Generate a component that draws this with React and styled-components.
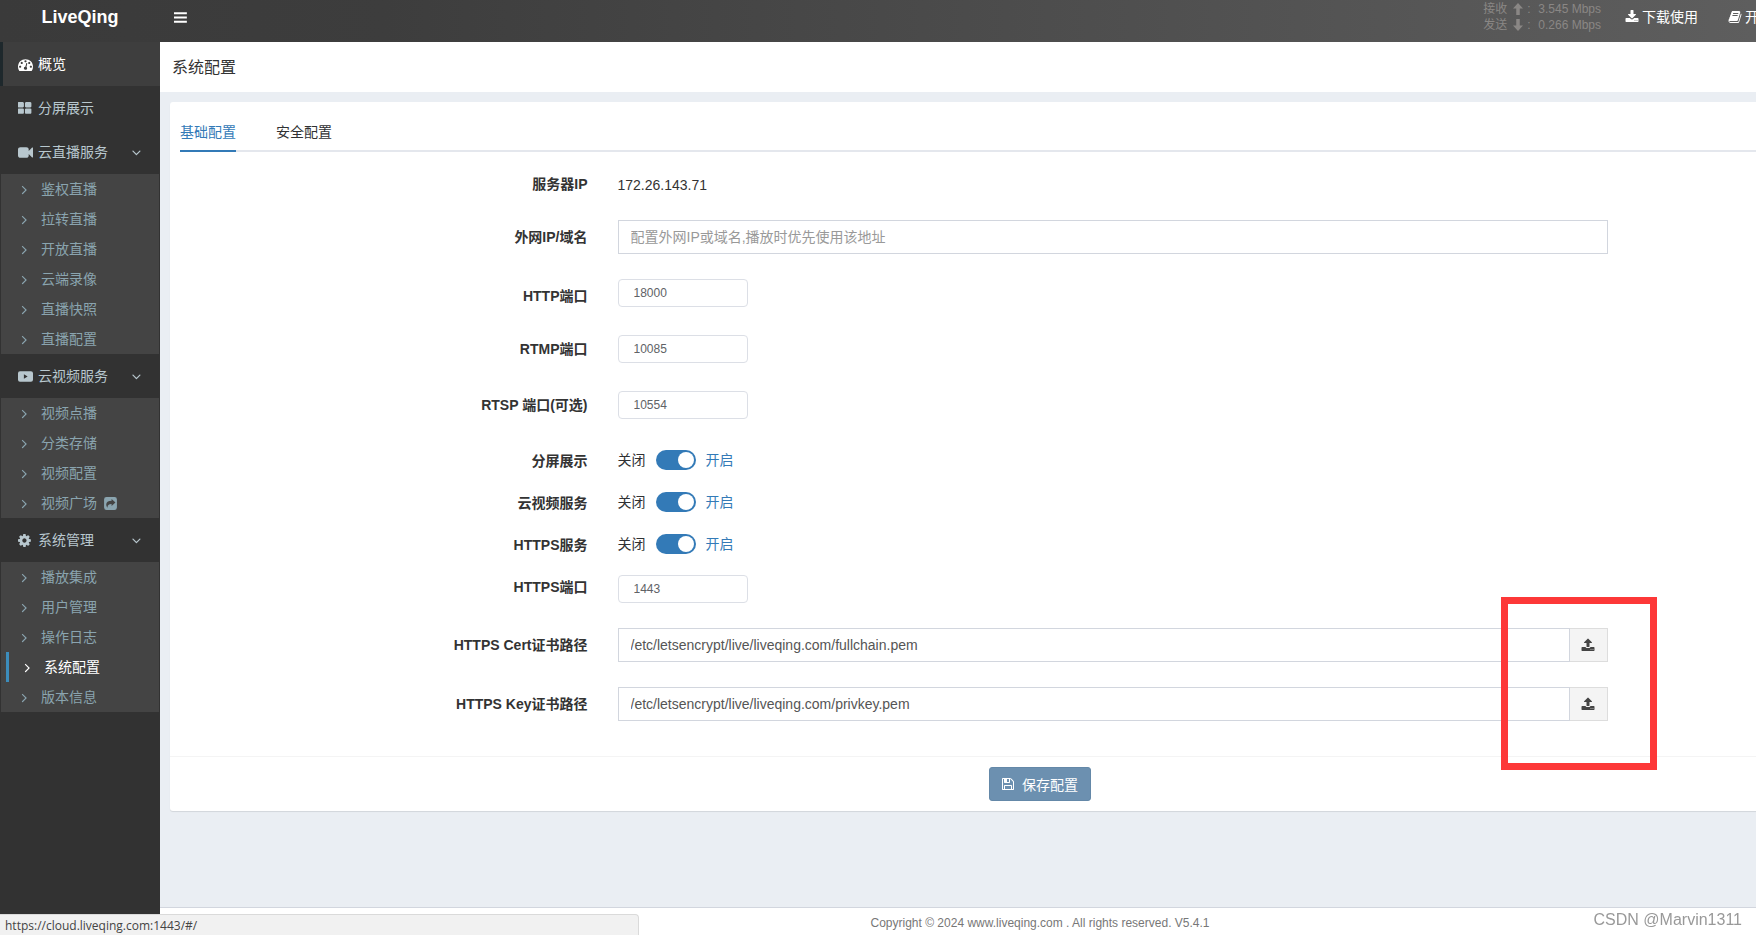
import React, {useState} from 'react'
import styled, {createGlobalStyle} from 'styled-components'

const paths = {
    dashboard: 'M384 1152q0-53-37.5-90.5t-90.5-37.5-90.5 37.5-37.5 90.5 37.5 90.5 90.5 37.5 90.5-37.5 37.5-90.5zm192-448q0-53-37.5-90.5t-90.5-37.5-90.5 37.5-37.5 90.5 37.5 90.5 90.5 37.5 90.5-37.5 37.5-90.5zm428 481l101-382q6-26-7.5-48.5t-38.5-29.5-48 6.5-30 39.5l-101 382q-60 5-107 43.5t-63 98.5q-20 77 20 146t117 89 146-20 89-117q16-60-6-117t-72-91zm660-33q0-53-37.5-90.5t-90.5-37.5-90.5 37.5-37.5 90.5 37.5 90.5 90.5 37.5 90.5-37.5 37.5-90.5zm-640-640q0-53-37.5-90.5t-90.5-37.5-90.5 37.5-37.5 90.5 37.5 90.5 90.5 37.5 90.5-37.5 37.5-90.5zm448 192q0-53-37.5-90.5t-90.5-37.5-90.5 37.5-37.5 90.5 37.5 90.5 90.5 37.5 90.5-37.5 37.5-90.5zm320 448q0 261-141 483-19 29-54 29h-1402q-35 0-54-29-141-221-141-483 0-182 71-348t191-286 286-191 348-71 348 71 286 191 191 286 71 348z',
    large: 'M832 1024v384q0 52-38 90t-90 38h-512q-52 0-90-38t-38-90v-384q0-52 38-90t90-38h512q52 0 90 38t38 90zm0-768v384q0 52-38 90t-90 38h-512q-52 0-90-38t-38-90v-384q0-52 38-90t90-38h512q52 0 90 38t38 90zm896 768v384q0 52-38 90t-90 38h-512q-52 0-90-38t-38-90v-384q0-52 38-90t90-38h512q52 0 90 38t38 90zm0-768v384q0 52-38 90t-90 38h-512q-52 0-90-38t-38-90v-384q0-52 38-90t90-38h512q52 0 90 38t38 90z',
    video: 'M1792 352v1088q0 42-39 59-13 5-25 5-27 0-45-19l-403-403v166q0 119-84.5 203.5t-203.5 84.5h-704q-119 0-203.5-84.5t-84.5-203.5v-704q0-119 84.5-203.5t203.5-84.5h704q119 0 203.5 84.5t84.5 203.5v165l403-402q18-19 45-19 12 0 25 5 39 17 39 59z',
    play: 'M240 256h1312q240 0 240 240v800q0 240-240 240h-1312q-240 0-240-240v-800q0-240 240-240zM704 640v512l448-256z',
    cog: 'M1152 896q0-106-75-181t-181-75-181 75-75 181 75 181 181 75 181-75 75-181zm512-109v222q0 12-8 23t-20 13l-185 28q-19 54-39 91 35 50 107 138 10 12 10 25t-9 23q-27 37-99 108t-94 71q-12 0-26-9l-138-108q-44 23-91 38-16 136-29 186-7 28-36 28h-222q-14 0-24.5-8.5t-11.5-21.5l-28-184q-49-16-90-37l-141 107q-10 9-25 9-14 0-25-11-126-114-165-168-7-10-7-23 0-12 8-23 15-21 51-66.5t54-70.5q-27-50-41-99l-183-27q-13-2-21-12.5t-8-23.5v-222q0-12 8-23t19-13l186-28q14-46 39-92-40-57-107-138-10-12-10-24 0-10 9-23 26-36 98.5-107.5t94.5-71.5q13 0 26 10l138 107q44-23 91-38 16-136 29-186 7-28 36-28h222q14 0 24.5 8.5t11.5 21.5l28 184q49 16 90 37l142-107q9-9 24-9 13 0 25 10 129 119 165 170 7 8 7 22 0 12-8 23-15 21-51 66.5t-54 70.5q26 50 41 98l183 28q13 2 21 12.5t8 23.5z',
    share: 'M416 128h960q288 0 288 288v960q0 288-288 288h-960q-288 0-288-288v-960q0-288 288-288zM1024 352v224q-640 0-640 480 0 200 160 352-40-448 480-448v224l464-416z',
    right: 'M1171 960q0 13-10 23l-466 466q-10 10-23 10t-23-10l-50-50q-10-10-10-23t10-23l393-393-393-393q-10-10-10-23t10-23l50-50q10-10 23-10t23 10l466 466q10 10 10 23z',
    down: 'M1395 736q0 13-10 23l-466 466q-10 10-23 10t-23-10l-466-466q-10-10-10-23t10-23l50-50q10-10 23-10t23 10l393 393 393-393q10-10 23-10t23 10l50 50q10 10 10 23z',
    bars: 'M128 256h1536v256h-1536zM128 768h1536v256h-1536zM128 1280h1536v256h-1536z',
    arrowUp: 'M896 128l640 704h-416v832h-448v-832h-416z',
    arrowDown: 'M896 1664l640-704h-416v-832h-448v832h-416z',
    download: 'M1344 1344q0-26-19-45t-45-19-45 19-19 45 19 45 45 19 45-19 19-45zm256 0q0-26-19-45t-45-19-45 19-19 45 19 45 45 19 45-19 19-45zm128-224v320q0 40-28 68t-68 28h-1472q-40 0-68-28t-28-68v-320q0-40 28-68t68-28h465l135 136q58 56 136 56t136-56l136-136h464q40 0 68 28t28 68zm-325-569q17 41-14 70l-448 448q-18 19-45 19t-45-19l-448-448q-31-29-14-70 17-39 59-39h256v-448q0-26 19-45t45-19h256q26 0 45 19t19 45v448h256q42 0 59 39z',
    upload: 'M1344 1472q0-26-19-45t-45-19-45 19-19 45 19 45 45 19 45-19 19-45zm256 0q0-26-19-45t-45-19-45 19-19 45 19 45 45 19 45-19 19-45zm128-224v320q0 40-28 68t-68 28h-1472q-40 0-68-28t-28-68v-320q0-40 28-68t68-28h427q21 56 70.5 92t110.5 36h256q61 0 110.5-36t70.5-92h427q40 0 68 28t28 68zm-325-648q-17 40-59 40h-256v448q0 26-19 45t-45 19h-256q-26 0-45-19t-19-45v-448h-256q-42 0-59-40-17-39 14-69l448-448q18-19 45-19t45 19l448 448q31 30 14 69z',
    book: 'M1703 478q40 57 18 129l-275 906q-19 64-76.5 107.5t-122.5 43.5h-923q-77 0-148.5-53.5t-99.5-131.5q-24-67-2-127 0-4 3-27t4-37q1-8-3-21.5t-3-19.5q2-11 8-21t16.5-23.5 16.5-23.5q23-38 45-91.5t30-91.5q3-10 .5-30t-.5-28q3-11 17-28t17-23q21-36 42-92t25-90q1-9-2.5-32t.5-28q4-13 22-30.5t22-22.5q19-26 42.5-84.5t27.5-96.5q1-8-3-25.5t-2-26.5q2-8 9-18t18-23 17-21q8-12 16.5-30.5t15-35 16-36 19.5-32 26.5-23.5 36-11.5 47.5 5.5l-1 3q38-9 51-9h761q74 0 114 56t18 130l-274 906q-36 119-71.5 153.5t-128.5 34.5h-869q-27 0-38 15-11 16-1 43 24 70 144 70h923q29 0 56-15.5t35-41.5l300-987q7-22 5-57 38 15 59 43zm-1064 2q-4 13 2 22.5t20 9.5h608q13 0 25.5-9.5t16.5-22.5l21-64q4-13-2-22.5t-20-9.5h-608q-13 0-25.5 9.5t-16.5 22.5zm-83 256q-4 13 2 22.5t20 9.5h608q13 0 25.5-9.5t16.5-22.5l21-64q4-13-2-22.5t-20-9.5h-608q-13 0-25.5 9.5t-16.5 22.5z',
    save: 'M512 1536h768v-384h-768v384zm896 0h128v-896q0-14-10-38.5t-20-34.5l-281-281q-10-10-34-20t-39-10v416q0 40-28 68t-68 28h-576q-40 0-68-28t-28-68v-416h-128v1280h128v-416q0-40 28-68t68-28h832q40 0 68 28t28 68v416zm-384-928v-320q0-13-9.5-22.5t-22.5-9.5h-192q-13 0-22.5 9.5t-9.5 22.5v320q0 13 9.5 22.5t22.5 9.5h192q13 0 22.5-9.5t9.5-22.5zm640 32v928q0 40-28 68t-68 28h-1344q-40 0-68-28t-28-68v-1344q0-40 28-68t68-28h928q40 0 88 20t76 48l280 280q28 28 48 76t20 88z',
}

// narrow glyphs start a little inside their box, cut that space on the left
const narrow = ['large', 'cog', 'right', 'down', 'bars', 'save']

const menu = [
    {icon: 'dashboard', text: '概览', active: true},
    {icon: 'large', text: '分屏展示'},
    {
        icon: 'video',
        text: '云直播服务',
        items: ['鉴权直播', '拉转直播', '开放直播', '云端录像', '直播快照', '直播配置'],
    },
    {
        icon: 'play',
        text: '云视频服务',
        items: ['视频点播', '分类存储', '视频配置', '视频广场'],
    },
    {
        icon: 'cog',
        text: '系统管理',
        items: ['播放集成', '用户管理', '操作日志', '系统配置', '版本信息'],
    },
]

function Icon({name, size = 14}) {
    const left = narrow.includes(name) ? 128 : 0
    return (
        <IconSvg viewBox={`${left} 0 1792 1792`} width={size} height={size} aria-hidden="true">
            <path fillRule={name === 'play' || name === 'share' ? 'evenodd' : 'nonzero'} d={paths[name]} />
        </IconSvg>
    )
}

function Sidebar() {
    return (
        <SidebarWrapper>
            {menu.map(group => (
                <li key={group.text}>
                    <MenuLink href="#/" $active={group.active}>
                        <IconSlot><Icon name={group.icon} size={15} /></IconSlot>
                        <span>{group.text}</span>
                        {group.items && <Icon name="down" size={15} />}
                    </MenuLink>
                    {group.items && (
                        <SubMenu>
                            {group.items.map(item => (
                                <li key={item}>
                                    <SubLink href="#/" $active={item === '系统配置'}>
                                        <SubArrow><Icon name="right" size={15} /></SubArrow>
                                        {item}
                                        {item === '视频广场' && <Icon name="share" size={15} />}
                                    </SubLink>
                                </li>
                            ))}
                        </SubMenu>
                    )}
                </li>
            ))}
        </SidebarWrapper>
    )
}

function PortRow({id, label, value, offset}) {
    return (
        <FormRow>
            <Label htmlFor={id}>{label}</Label>
            <Field $offset={offset}>
                <PortInput id={id} type="text" defaultValue={value} />
            </Field>
        </FormRow>
    )
}

function SwitchRow({id, label}) {
    const [on, setOn] = useState(true)
    return (
        <FormRow $compact>
            <Label htmlFor={id}>{label}</Label>
            <SwitchField>
                <SwitchText $active={!on}>关闭</SwitchText>
                <Switch id={id} type="checkbox" checked={on} onChange={() => setOn(!on)} />
                <SwitchText $active={on}>开启</SwitchText>
            </SwitchField>
        </FormRow>
    )
}

function FileRow({id, label, value}) {
    return (
        <FormRow>
            <Label htmlFor={id}>{label}</Label>
            <Field>
                <InputGroup>
                    <TextInput id={id} type="text" defaultValue={value} />
                    <UploadButton type="button" aria-label={label}><Icon name="upload" /></UploadButton>
                </InputGroup>
            </Field>
        </FormRow>
    )
}

export default function App() {
    return (
        <>
            <GlobalStyle />
            <Viewport>
                <Page>
                    <Header>
                        <Logo href="#/">LiveQing</Logo>
                        <MenuButton type="button" aria-label="menu"><Icon name="bars" size={15} /></MenuButton>
                        <Speed>
                            <span>接收</span><Icon name="arrowUp" size={14} /><span>:</span><span>3.545 Mbps</span>
                            <span>发送</span><Icon name="arrowDown" size={14} /><span>:</span><span>0.266 Mbps</span>
                        </Speed>
                        <HeaderLink href="#/"><Icon name="download" />下载使用</HeaderLink>
                        <HeaderLink href="#/"><Icon name="book" />开</HeaderLink>
                    </Header>
                    <Body>
                        <Sidebar />
                        <Main>
                            <Title>系统配置</Title>
                            <Content>
                                <Box>
                                    <BoxBody>
                                        <Tabs>
                                            <Tab type="button" $active>基础配置</Tab>
                                            <Tab type="button">安全配置</Tab>
                                        </Tabs>
                                        <Form>
                                            <FormRow>
                                                <Label as="span">服务器IP</Label>
                                                <Field><StaticText>172.26.143.71</StaticText></Field>
                                            </FormRow>
                                            <FormRow>
                                                <Label htmlFor="host">外网IP/域名</Label>
                                                <Field>
                                                    <TextInput id="host" type="text" placeholder="配置外网IP或域名,播放时优先使用该地址" />
                                                </Field>
                                            </FormRow>
                                            <PortRow id="http" label="HTTP端口" value="18000" />
                                            <PortRow id="rtmp" label="RTMP端口" value="10085" offset={3} />
                                            <PortRow id="rtsp" label="RTSP 端口(可选)" value="10554" offset={3} />
                                            <SwitchRow id="screen" label="分屏展示" />
                                            <SwitchRow id="vod" label="云视频服务" />
                                            <SwitchRow id="https" label="HTTPS服务" />
                                            <PortRow id="https-port" label="HTTPS端口" value="1443" offset={5} />
                                            <FileRow id="cert" label="HTTPS Cert证书路径" value="/etc/letsencrypt/live/liveqing.com/fullchain.pem" />
                                            <FileRow id="key" label="HTTPS Key证书路径" value="/etc/letsencrypt/live/liveqing.com/privkey.pem" />
                                        </Form>
                                    </BoxBody>
                                    <BoxFooter>
                                        <SaveButton type="button"><Icon name="save" />保存配置</SaveButton>
                                    </BoxFooter>
                                    <Marker />
                                </Box>
                            </Content>
                            <Footer>Copyright © 2024 www.liveqing.com . All rights reserved. V5.4.1</Footer>
                        </Main>
                    </Body>
                </Page>
            </Viewport>
            <StatusBar>https://cloud.liveqing.com:1443/#/</StatusBar>
            <Watermark>CSDN @Marvin1311</Watermark>
        </>
    )
}

const GlobalStyle = createGlobalStyle`
    * {
        box-sizing: border-box;
    }
    body {
        margin: 0;
        font-family: "Liberation Sans", "Noto Sans CJK SC", sans-serif;
        font-size: 14px;
        line-height: 20px;
        color: #333;
    }
    a {
        text-decoration: none;
    }
    ul {
        list-style: none;
        margin: 0;
        padding: 0;
    }
    input, button {
        font-family: inherit;
        font-size: 14px;
    }
`

const IconSvg = styled.svg`
    display: block;
    flex: none;
    fill: currentColor;
`

const Viewport = styled.div`
    overflow: hidden;
`

/* the admin layout never gets narrower than a full HD desktop */
const Page = styled.div`
    display: flex;
    flex-direction: column;
    min-width: 1920px;
    min-height: 100vh;
`

const Header = styled.header`
    display: flex;
    align-items: center;
    height: 42px;
    padding: 0 146px 8px 0;
    background: linear-gradient(to right, #3a3a3a, #3d3d3d 20%, #626262);
`

const Logo = styled.a`
    width: 160px;
    text-align: center;
    font-size: 18px;
    font-weight: bold;
    color: #fff;
`

const MenuButton = styled.button`
    padding: 0 14px;
    margin-right: auto;
    border: 0;
    background: none;
    color: #fff;
`

const Speed = styled.div`
    display: grid;
    grid-template-columns: 28px 16px 11px auto;
    align-items: center;
    padding-right: 9px;
    font-size: 12px;
    line-height: 16px;
    color: #8a8785;
`

const HeaderLink = styled.a`
    display: flex;
    align-items: center;
    gap: 3px;
    padding: 0 15px;
    color: #fff;
`

const Body = styled.div`
    display: flex;
    flex: 1;
`

const SidebarWrapper = styled.ul`
    width: 160px;
    flex: none;
    background: #323232;
`

const MenuLink = styled.a`
    display: flex;
    align-items: center;
    padding: 12px 15px;
    border-left: 3px solid ${props => props.$active ? '#1e282c' : 'transparent'};
    background: ${props => props.$active ? '#3e3e3e' : 'none'};
    color: ${props => props.$active ? '#fff' : '#b8c7ce'};
    > span + svg {
        margin-left: auto;
    }
`

const IconSlot = styled.i`
    width: 20px;
`

const SubMenu = styled.ul`
    margin: 0 1px;
    padding-left: 5px;
    background: #444;
`

const SubLink = styled.a`
    display: flex;
    align-items: center;
    padding: 5px 5px 5px 12px;
    border-left: ${props => props.$active ? '3px solid #3c8dbc' : '0'};
    color: ${props => props.$active ? '#fff' : '#8aa4af'};
    > svg {
        margin-left: 6px;
    }
`

const SubArrow = styled.i`
    width: 23px;
`

const Main = styled.main`
    display: flex;
    flex-direction: column;
    flex: 1;
    background: #eaeef3;
`

const Title = styled.h1`
    margin: 0;
    padding: 16px 12px 14px;
    background: #fff;
    font-size: 16px;
    font-weight: normal;
    line-height: 20px;
`

const Content = styled.section`
    flex: 1;
    padding: 10px;
`

const Box = styled.div`
    position: relative;
    border-radius: 3px;
    background: #fff;
    box-shadow: 0 1px 1px rgba(0, 0, 0, 0.1);
`

const BoxBody = styled.div`
    padding: 10px;
`

const Tabs = styled.div`
    display: flex;
    gap: 40px;
    height: 40px;
    margin-bottom: 15px;
    box-shadow: inset 0 -2px #e4e7ed;
`

const Tab = styled.button`
    padding: 0;
    border: 0;
    background: none;
    line-height: 40px;
    box-shadow: ${props => props.$active ? 'inset 0 -2px #337ab7' : 'none'};
    color: ${props => props.$active ? '#337ab7' : '#303133'};
`

const Form = styled.form`
    margin: 0 -15px;
`

const FormRow = styled.div`
    display: flex;
    align-items: flex-start;
    min-height: ${props => props.$compact ? '27px' : '28px'};
    margin-bottom: ${props => props.$compact ? '15px' : '25px'};
`

const Label = styled.label`
    width: 25%;
    padding: 7px 15px 0;
    margin-bottom: -4px;
    text-align: right;
    font-weight: bold;
`

const Field = styled.div`
    width: 58.3333%;
    padding: ${props => props.$offset || 0}px 15px 0;
`

const StaticText = styled.p`
    margin: 0;
    padding-top: 8px;
`

const TextInput = styled.input`
    display: block;
    width: 100%;
    height: 34px;
    padding: 6px 12px;
    border: 1px solid #d2d6de;
    border-radius: 0;
    background: #fff;
    color: #555;
    &::placeholder {
        color: #999;
    }
`

const PortInput = styled.input`
    display: block;
    width: 130px;
    height: 28px;
    padding: 0 15px;
    border: 1px solid #dcdfe6;
    border-radius: 4px;
    color: #606266;
    font-size: 12px;
`

const InputGroup = styled.div`
    display: flex;
`

const UploadButton = styled.button`
    padding: 0 12px 0 11px;
    border: 1px solid #ddd;
    border-left: 0;
    background: #f4f4f4;
    color: #444;
`

const SwitchField = styled(Field)`
    display: flex;
    align-items: center;
    gap: 10px;
    padding-top: 6px;
`

const SwitchText = styled.span`
    color: ${props => props.$active ? '#337ab7' : '#303133'};
`

const Switch = styled.input`
    appearance: none;
    width: 40px;
    height: 20px;
    margin: 0;
    padding: 2px;
    border-radius: 10px;
    background: ${props => props.checked ? '#337ab7' : '#dcdfe6'};
    &::before {
        content: "";
        display: block;
        width: 16px;
        height: 16px;
        margin-left: ${props => props.checked ? 'auto' : '0'};
        border-radius: 50%;
        background: #fff;
    }
`

const BoxFooter = styled.div`
    display: flex;
    justify-content: center;
    padding: 10px;
    border-top: 1px solid #f4f4f4;
`

const SaveButton = styled.button`
    display: flex;
    align-items: center;
    gap: 6px;
    height: 34px;
    padding: 0 12px;
    border: 1px solid #6488a8;
    border-radius: 3px;
    background: #6c90b0;
    color: #fff;
`

/* red frame that points at the upload buttons */
const Marker = styled.div`
    position: absolute;
    right: 253px;
    bottom: 41px;
    width: 156px;
    height: 173px;
    border: 7px solid #fd3838;
    pointer-events: none;
`

const Footer = styled.footer`
    padding: 5px 15px 2px;
    border-top: 1px solid #d2d6de;
    background: #fff;
    text-align: center;
    font-size: 12px;
    color: #777;
`

const StatusBar = styled.div`
    position: fixed;
    left: 0;
    bottom: 0;
    width: 639px;
    padding: 1px 5px 0;
    border: 1px solid #dadada;
    border-width: 1px 1px 0 0;
    border-radius: 0 4px 0 0;
    background: #f1f1f1;
    font-family: "Open Sans", sans-serif;
    font-size: 12px;
    line-height: 19px;
    color: #444;
`

const Watermark = styled.div`
    position: fixed;
    right: 14px;
    bottom: 5px;
    font-size: 16px;
    color: #999;
`
